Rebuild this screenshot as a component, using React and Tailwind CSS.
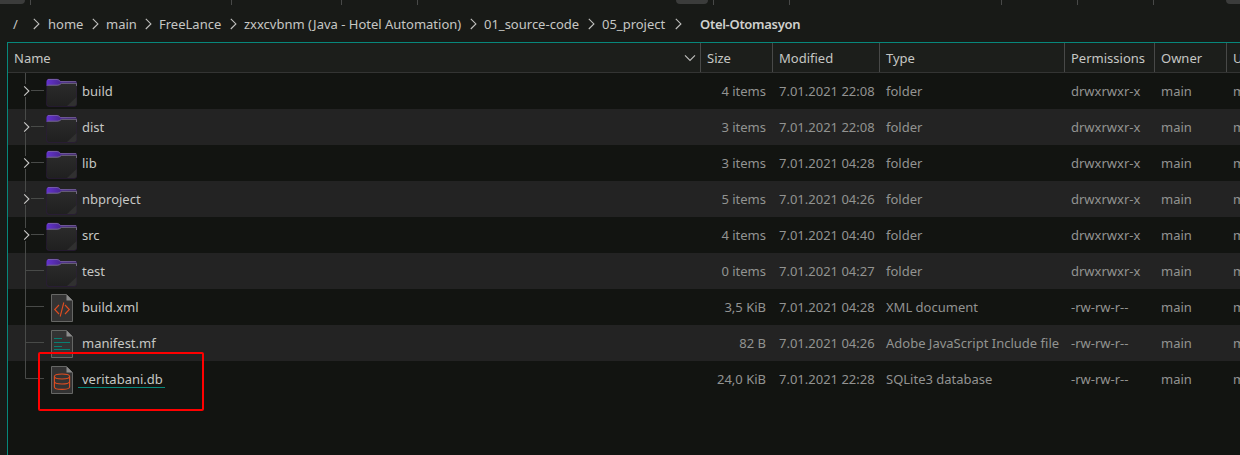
import React from "react";

const crumbs = [
  { label: "/", w: "w-[35px]" },
  { label: "home", w: "w-[58px]" },
  { label: "main", w: "w-[53px]" },
  { label: "FreeLance", w: "w-[85px]" },
  { label: "zxxcvbnm (Java - Hotel Automation)", w: "w-[240px]" },
  { label: "01_source-code", w: "w-[118px]" },
  { label: "05_project", w: "w-[98px]" },
];

const rows = [
  ["build", "4 items", "7.01.2021 22:08", "folder", "folder", true],
  ["dist", "3 items", "7.01.2021 22:08", "folder", "folder", true],
  ["lib", "3 items", "7.01.2021 04:28", "folder", "folder", true],
  ["nbproject", "5 items", "7.01.2021 04:26", "folder", "folder", true],
  ["src", "4 items", "7.01.2021 04:40", "folder", "folder", true],
  ["test", "0 items", "7.01.2021 04:27", "folder", "folder", false],
  ["build.xml", "3,5 KiB", "7.01.2021 04:28", "XML document", "xml", false],
  ["manifest.mf", "82 B", "7.01.2021 04:26", "Adobe JavaScript Include file", "text", false],
  ["veritabani.db", "24,0 KiB", "7.01.2021 22:28", "SQLite3 database", "db", false],
];

function Chevron({ className = "" }) {
  return (
    <svg width="7" height="12" viewBox="0 0 7 12" className={"shrink-0 " + className} fill="none" stroke="#c0c0be" strokeWidth="1.1">
      <path d="M.8 .8 5.9 5.9 .8 11" />
    </svg>
  );
}

function Branch({ expandable, last }) {
  return (
    <svg width="38" height="36" viewBox="0 0 38 36" className="shrink-0" fill="none" stroke="#484a48">
      {expandable ? (
        <>
          <path d="M17.5 0V11M17.5 24V36M23 17.5H36" />
          <path d="M16.2 13.3 20.9 18 16.2 22.7" stroke="#cacac8" strokeWidth="1.1" />
        </>
      ) : (
        <path d={last ? "M17.5 0V17.5H36" : "M17.5 0V36M18 17.5H36"} />
      )}
    </svg>
  );
}

function FolderIcon() {
  return (
    <svg width="32" height="36" viewBox="0 0 32 36" className="shrink-0">
      <defs>
        <linearGradient id="tab" x1="0" x2="1" y1="0" y2="0">
          <stop offset="0" stopColor="#6433cf" />
          <stop offset=".45" stopColor="#4b2796" />
          <stop offset="1" stopColor="#3c2268" />
        </linearGradient>
        <linearGradient id="body" x1="0" x2="0" y1="0" y2="1">
          <stop offset="0" stopColor="#2b2b2b" />
          <stop offset="1" stopColor="#202020" />
        </linearGradient>
      </defs>
      <path d="M.5 9Q.5 5.5 3 5.5H11Q12.5 5.5 14.5 8H29Q31 8 31 10V31Q31 33.7 28 33.7H3Q.3 33.7 .3 31Z" fill="#2b1c3a" />
      <path d="M.5 13V9Q.5 6 3 6H11Q12.5 6 14.5 8H29Q31 8 31 10V13Z" fill="url(#tab)" />
      <path d="M2 6.5H11Q12.5 6.5 14.5 8.5H30" fill="none" stroke="#86779f" strokeWidth=".6" />
      <path d="M1 13.5Q1 12.5 2.5 12.5H11.5Q13.5 12.5 15.5 10.5H29Q30.5 10.5 30.5 12V31Q30.5 33 28 33H3Q1 33 1 31Z" fill="url(#body)" />
      <path d="M1.5 12.2H11.5Q13.5 12.2 15.5 10.3H30.5V13" fill="none" stroke="#777282" strokeWidth=".9" />
      <path d="M30.5 24V31Q30.5 33 28 33H21Z" fill="#303030" />
    </svg>
  );
}

function FileIcon({ kind }) {
  return (
    <svg width="32" height="36" viewBox="0 -1 32 36" className="shrink-0" fill="none">
      <path d="M5.5 4.5H20.5L26.5 10.5V31.5H5.5Z" fill="#333333" stroke="#666765" />
      <path d="M20.5 4.5V10.5H26.5Z" fill="#8b8b8b" />
      {kind === "xml" && (
        <path d="M13 15 8.7 19.5 13 24M19 15 23.3 19.5 19 24M17.8 12.5 14.2 26.5" stroke="#e04d20" strokeWidth="1.1" />
      )}
      {kind === "text" && (
        <path d="M8 12.5H16M8 16.5H24M8 20.5H16M8 23.5H24" stroke="#087f72" />
      )}
      {kind === "db" && (
        <g stroke="#e04d20" strokeWidth="1.1">
          <ellipse cx="16" cy="14.5" rx="7.6" ry="2.5" />
          <path d="M8.4 14.5V25C8.4 28.2 23.6 28.2 23.6 25V14.5M8.4 19.6C8.4 22.8 23.6 22.8 23.6 19.6" />
        </g>
      )}
    </svg>
  );
}

function HeaderCell({ w, children }) {
  return <div className={"h-full shrink-0 border-l border-[#484948] pl-[6px] leading-[30px] " + w}>{children}</div>;
}

function FileRow({ row, index }) {
  const [name, size, modified, type, kind, expandable] = row;
  const folder = kind === "folder";
  const last = kind === "db";
  return (
    <div className={"flex h-9 shrink-0 leading-9 text-[#929391] " + (index % 2 ? "bg-[#232323]" : "bg-[#121411]")}>
      <div className="flex w-[692px] shrink-0 text-[#c6c7c4]">
        <Branch expandable={expandable} last={last} />
        {folder ? <FolderIcon /> : <FileIcon kind={kind} />}
        {last ? (
          <div className="h-[27px] w-[87px] border-b border-[#07877b] pl-1">{name}</div>
        ) : (
          <div className="pl-1">{name}</div>
        )}
      </div>
      <div className="w-[66px] shrink-0 text-right">{size}</div>
      <div className="w-[120px] shrink-0 pl-[13px]">{modified}</div>
      <div className="w-[185px] shrink-0">{type}</div>
      <div className="w-[90px] shrink-0">{folder ? "drwxrwxr-x" : "-rw-rw-r--"}</div>
      <div className="w-[72px] shrink-0">main</div>
      <div className="shrink-0">main</div>
    </div>
  );
}

function Toolbar() {
  return (
    <div className="flex h-[5px] shrink-0 overflow-hidden">
      <div className="h-1 w-[25px] shrink-0 rounded-br bg-[#3b3c3b]" />
      <div className="ml-[5px] w-px shrink-0 bg-[#484948]" />
      <div className="ml-[200px] w-px shrink-0 bg-[#484948]" />
      <div className="ml-[109px] w-px shrink-0 bg-[#484948]" />
      <div className="ml-[75px] w-px shrink-0 bg-[#484948]" />
      <div className="ml-[258px] h-1 w-8 shrink-0 rounded-b bg-[#3b3c3b]" />
      <div className="ml-[5px] w-px shrink-0 bg-[#484948]" />
      <div className="ml-[75px] w-px shrink-0 bg-[#484948]" />
      <div className="ml-[211px] w-px shrink-0 bg-[#484948]" />
      <div className="ml-[75px] w-px shrink-0 bg-[#484948]" />
      <div className="ml-[75px] w-px shrink-0 bg-[#484948]" />
      <div className="ml-[72px] h-1 w-[14px] shrink-0 rounded-bl bg-[#3b3c3b]" />
    </div>
  );
}

export default function App() {
  return (
    <div className="relative flex h-[455px] w-[1240px] flex-col overflow-hidden whitespace-nowrap bg-[#181a17] font-['Noto_Sans',sans-serif] text-[13px] text-[#c6c7c4]">
      <Toolbar />
      <nav className="flex h-[37px] shrink-0 pl-[13px] leading-[38px]">
        {crumbs.map((c, i) => (
          <div key={c.label} className={"flex shrink-0 justify-between " + c.w}>
            <span>{c.label}</span>
            <Chevron className={"mt-[13px] " + (i === 0 ? "mr-2" : i === 6 ? "mr-[18px]" : "mr-[7px]")} />
          </div>
        ))}
        <span className="font-semibold tracking-[-0.3px] text-[#d0d1ce]">Otel-Otomasyon</span>
      </nav>
      <main className="ml-[7px] flex flex-1 flex-col overflow-hidden border-t border-l border-[#07877b] bg-[#121411]">
        <header className="flex h-[30px] shrink-0 border-b border-[#333433] bg-[#1c1e1b]">
          <div className="flex w-[692px] shrink-0 items-center justify-between pr-1 pl-[6px] leading-[30px]">
            <span>Name</span>
            <svg width="12" height="8" viewBox="0 0 12 8" fill="none" stroke="#c0c0be" strokeWidth="1.1">
              <path d="M1 1.4 6 6.4 11 1.4" />
            </svg>
          </div>
          <HeaderCell w="w-[72px]">Size</HeaderCell>
          <HeaderCell w="w-[107px]">Modified</HeaderCell>
          <HeaderCell w="w-[185px]">Type</HeaderCell>
          <HeaderCell w="w-[90px]">Permissions</HeaderCell>
          <HeaderCell w="w-[72px]">Owner</HeaderCell>
          <HeaderCell w="w-[107px]">User Group</HeaderCell>
        </header>
        {rows.map((row, i) => <FileRow key={row[0]} row={row} index={i} />)}
      </main>
      <div className="absolute top-[352px] left-[38px] h-[59px] w-[166px] rounded-[2px] border-2 border-[#ff0000]" />
    </div>
  );
}
